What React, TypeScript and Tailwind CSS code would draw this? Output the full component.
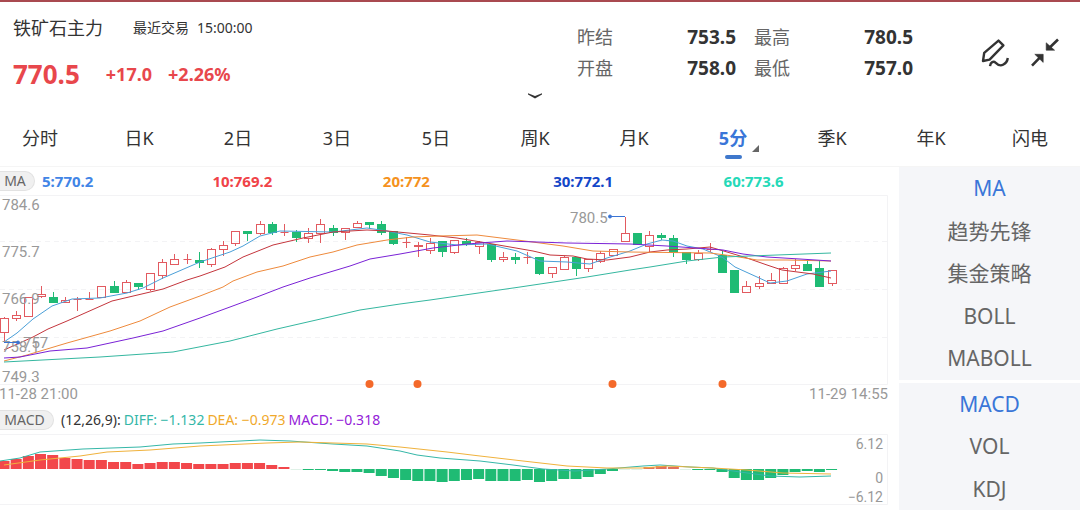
import { useState } from 'react';
import clsx from 'clsx';

// [high, body top, body bottom, low, up]
type Candle = [number, number, number, number, boolean];
type Point = [number, number];

const STEP = 12.17;
const FIRST_X = 4;

const periods = ['分时', '日K', '2日', '3日', '5日', '周K', '月K', '5分', '季K', '年K', '闪电'];
const mainIndicators = ['MA', '趋势先锋', '集金策略', 'BOLL', 'MABOLL'];
const subIndicators = ['MACD', 'VOL', 'KDJ'];

const quotes = [
  { label: '昨结', value: '753.5' },
  { label: '最高', value: '780.5' },
  { label: '开盘', value: '758.0' },
  { label: '最低', value: '757.0' },
];

const maLegend = [
  { text: '5:770.2', color: 'text-[#4285e6]' },
  { text: '10:769.2', color: 'text-[#f04348]' },
  { text: '20:772', color: 'text-[#f5921e]' },
  { text: '30:772.1', color: 'text-[#1446c8]' },
  { text: '60:773.6', color: 'text-[#25d9b8]' },
];

const candles: Candle[] = [
  [122, 123, 137, 147, true], [116, 120, 123, 126, true], [102, 102, 121, 121, true], [91, 99, 101, 103, true],
  [97, 102, 107, 107, false], [102, 105, 107, 107, true], [102, 104, 104, 116, true], [97, 104, 104, 104, true],
  [91, 91, 102, 103, true], [86, 91, 97, 97, false], [85, 87, 97, 97, true], [88, 88, 91, 95, false],
  [78, 78, 94, 96, true], [64, 67, 80, 84, true], [59, 64, 69, 69, true], [59, 64, 64, 69, true],
  [57, 65, 67, 73, false], [53, 54, 69, 72, true], [46, 50, 54, 61, true], [36, 36, 48, 51, true],
  [36, 36, 38, 46, false], [26, 29, 38, 40, true], [27, 29, 37, 40, false], [29, 37, 37, 41, true],
  [35, 37, 42, 47, false], [33, 38, 43, 48, true], [24, 29, 38, 48, true], [30, 33, 37, 41, false],
  [33, 33, 37, 45, true], [26, 28, 32, 33, true], [27, 27, 29, 34, false], [26, 29, 37, 40, false],
  [36, 36, 48, 50, false], [42, 47, 47, 53, true], [47, 50, 51, 62, true], [43, 48, 55, 59, true],
  [46, 46, 56, 62, false], [45, 45, 57, 59, true], [43, 46, 48, 51, false], [46, 47, 51, 59, true],
  [49, 49, 64, 67, false], [57, 62, 64, 67, true], [58, 62, 64, 69, false], [57, 62, 62, 69, true],
  [62, 62, 78, 80, false], [72, 72, 78, 83, true], [61, 62, 74, 75, true], [62, 62, 73, 81, false],
  [64, 64, 73, 77, true], [56, 58, 66, 68, true], [54, 54, 60, 60, true], [22, 38, 46, 47, true],
  [38, 38, 49, 49, false], [36, 40, 51, 57, true], [38, 40, 42, 45, false], [40, 43, 57, 62, false],
  [57, 57, 64, 69, false], [55, 58, 64, 66, true], [48, 54, 54, 57, true], [56, 60, 77, 77, false],
  [75, 75, 97, 97, false], [86, 91, 97, 97, true], [81, 88, 91, 94, true], [78, 85, 88, 88, true],
  [72, 73, 88, 88, true], [64, 70, 73, 76, true], [64, 69, 75, 75, false], [66, 73, 91, 91, false],
  [75, 75, 88, 91, true],
];

const maLines: { color: string; points: Point[] }[] = [
  {
    color: '#4a9fd8',
    points: [
      [4, 147], [17, 138], [33, 124], [52, 111], [72, 104], [100, 103], [127, 98], [143, 93], [163, 83], [200, 67],
      [230, 57], [243, 51], [260, 41], [280, 36], [333, 37], [367, 33], [387, 36], [407, 40], [430, 47], [457, 50],
      [487, 49], [517, 56], [540, 66], [567, 67], [590, 69], [607, 63], [630, 56], [647, 49], [662, 45], [673, 46],
      [687, 51], [703, 54], [722, 62], [735, 72], [757, 82], [770, 88], [787, 86], [807, 79], [831, 76],
    ],
  },
  {
    color: '#c4353c',
    points: [
      [4, 155], [33, 142], [48, 134], [67, 126], [112, 106], [163, 94], [187, 85], [200, 81], [225, 72], [243, 62],
      [273, 50], [303, 43], [333, 37], [367, 35], [387, 36], [430, 40], [457, 43], [487, 48], [533, 56], [550, 60],
      [573, 61], [587, 64], [607, 65], [630, 62], [650, 57], [667, 55], [687, 54], [710, 52], [727, 57], [747, 63],
      [767, 70], [782, 75], [813, 79], [831, 83],
    ],
  },
  {
    color: '#ee8a3c',
    points: [
      [4, 166], [27, 160], [67, 148], [110, 136], [140, 126], [170, 112], [200, 101], [223, 92], [233, 86], [257, 77],
      [283, 71], [310, 62], [333, 57], [357, 50], [387, 45], [413, 42], [440, 41], [477, 40], [517, 45], [563, 51],
      [593, 56], [630, 57], [710, 58], [733, 61], [757, 65], [787, 65], [831, 66],
    ],
  },
  {
    color: '#7a22d6',
    points: [
      [4, 163], [20, 162], [50, 156], [87, 153], [133, 143], [163, 136], [200, 123], [230, 112], [257, 102],
      [283, 92], [310, 83], [350, 71], [370, 64], [400, 59], [433, 53], [467, 49], [507, 46], [567, 48], [630, 49],
      [667, 51], [710, 54], [723, 55], [743, 59], [767, 62], [800, 64], [831, 66],
    ],
  },
  {
    color: '#35b7a0',
    points: [
      [4, 167], [100, 162], [173, 157], [230, 146], [277, 134], [360, 115], [400, 109], [430, 105], [520, 92],
      [587, 82], [630, 75], [650, 72], [687, 66], [723, 62], [750, 61], [831, 58],
    ],
  },
];

const priceLabels = [
  { text: '784.6', y: 15 },
  { text: '775.7', y: 62 },
  { text: '766.9', y: 109 },
  { text: '758.1', y: 157 },
  { text: '749.3', y: 187 },
];

const markers = [369, 417, 612, 722];

const macdBars = [
  8, 10, 13, 15, 14, 11, 10, 9, 9, 7, 7, 5, 6, 7, 7, 6, 5, 5, 5, 6, 6, 6, 4, 2, 0, -1, -1, -2, -3, -3, -4, -7, -9,
  -11, -12, -12, -13, -12, -11, -10, -12, -12, -12, -11, -13, -12, -10, -10, -8, -5, -2, 0, 0, 2, 3, 2, 0, -1, -1,
  -3, -9, -11, -11, -9, -6, -3, -2, -3, -1,
];

const diffLine: Point[] = [
  [0, 27], [20, 24], [40, 18], [83, 15], [140, 13], [173, 10], [200, 9], [260, 6], [290, 7], [333, 10], [367, 12],
  [400, 17], [417, 21], [440, 24], [480, 27], [513, 31], [543, 35], [575, 37], [607, 35], [643, 32], [660, 31],
  [690, 33], [713, 34], [740, 38], [770, 42], [800, 43], [831, 42],
];

const deaLine: Point[] = [
  [4, 31], [40, 26], [80, 22], [107, 18], [150, 16], [200, 12], [267, 9], [300, 8], [367, 10], [400, 13], [447, 18],
  [480, 22], [523, 27], [567, 32], [607, 34], [643, 34], [667, 32], [713, 34], [747, 36], [783, 39], [831, 40],
];

const toPoints = (points: Point[]) => points.map((p) => p.join(',')).join(' ');

const CandleShape = ({ candle, index }: { candle: Candle; index: number }) => {
  const [high, top, bottom, low, up] = candle;
  const x = Math.round(FIRST_X + index * STEP) + 0.5;
  const color = up ? '#e25a60' : '#1fbb74';

  return (
    <g stroke={color} strokeWidth={1}>
      {high < top && <line x1={x} y1={high} x2={x} y2={top} />}
      {low > bottom && <line x1={x} y1={bottom} x2={x} y2={low} />}
      {bottom === top ? (
        <line x1={x - 4} y1={top + 0.5} x2={x + 4} y2={top + 0.5} />
      ) : (
        <rect x={x - 4} y={top + 0.5} width={8} height={bottom - top} fill={up ? 'none' : color} />
      )}
    </g>
  );
};

const PriceChart = () => (
  <svg viewBox="0 0 899 210" className="block w-full font-[Roboto,sans-serif]" role="img" aria-label="5分 K线">
    <g stroke="#f3f3f5" fill="none">
      <path d="M0 .5H887.5V189.5H0" />
      <path d="M0 46.5H887M0 94.5H887M0 142.5H887" strokeDasharray="5 4" />
    </g>
    {candles.map((candle, i) => (
      <CandleShape key={i} candle={candle} index={i} />
    ))}
    {maLines.map((line) => (
      <polyline key={line.color} points={toPoints(line.points)} fill="none" stroke={line.color} strokeLinejoin="round" />
    ))}
    <g fill="#999" fontSize="15">
      {priceLabels.map((label) => (
        <text key={label.text} x="2" y={label.y}>{label.text}</text>
      ))}
      <text x="570" y="28">780.5</text>
      <text x="23" y="153">757</text>
      <text x="-1" y="204">11-28 21:00</text>
      <text x="888" y="204" textAnchor="end">11-29 14:55</text>
    </g>
    {/* High and low pointers */}
    <g stroke="#3a74d4" fill="#3a74d4">
      <path d="M611 21.5H625M4 147.5H18" />
      <circle cx="610" cy="21.5" r="1.5" />
      <circle cx="18" cy="147.5" r="1.5" />
    </g>
    {markers.map((x) => (
      <circle key={x} cx={x + 0.5} cy="189" r="4" fill="#f4692a" />
    ))}
  </svg>
);

const MacdChart = () => (
  <svg viewBox="0 0 899 76" className="block w-full font-[Roboto,sans-serif]" role="img" aria-label="MACD">
    <path d="M0 .5H887.5V70.5H0" stroke="#f3f3f5" fill="none" />
    {macdBars.map((value, i) => {
      const height = Math.max(Math.abs(value), 0.5);
      return (
        <rect
          key={i}
          x={FIRST_X + i * STEP - 5.5}
          y={value > 0 ? 35 - height : 35}
          width={11}
          height={height}
          fill={value > 0 ? (i > 50 ? '#e2705c' : '#f2474b') : value === 0 ? '#bfe3cf' : '#1fbb74'}
        />
      );
    })}
    <polyline points={toPoints(diffLine)} fill="none" stroke="#35b7a8" />
    <polyline points={toPoints(deaLine)} fill="none" stroke="#f0b23c" />
    <g fill="#999" fontSize="14" textAnchor="end">
      <text x="883" y="15">6.12</text>
      <text x="883" y="49">0</text>
      <text x="883" y="68">−6.12</text>
    </g>
  </svg>
);

interface IndicatorListProps {
  items: string[];
  active: string;
  onSelect: (item: string) => void;
  className: string;
}

const IndicatorList = ({ items, active, onSelect, className }: IndicatorListProps) => (
  <div className={clsx('flex flex-col bg-[#f5f6f9]', className)}>
    {items.map((item) => (
      <button
        key={item}
        type="button"
        onClick={() => onSelect(item)}
        className={clsx('flex-1 text-[21px] leading-7', item === active ? 'text-[#3a76d8]' : 'text-[#666]')}
      >
        {item}
      </button>
    ))}
  </div>
);

const App = () => {
  const [period, setPeriod] = useState('5分');
  const [mainIndicator, setMainIndicator] = useState('MA');
  const [subIndicator, setSubIndicator] = useState('MACD');

  return (
    <div className="overflow-hidden border-t-2 border-[#a94a50] bg-white font-['Noto_Sans','Noto_Sans_CJK_SC',sans-serif] text-[#333]">
      {/* Quote header */}
      <header className="flex items-start pr-[21px] pl-[13px]">
        <div className="w-[564px] shrink-0 pt-3">
          <div className="flex items-center gap-[30px] leading-7">
            <h1 className="text-lg leading-7">铁矿石主力</h1>
            <p className="flex gap-2 text-sm leading-7">
              <span>最近交易</span>
              <span>15:00:00</span>
            </p>
          </div>
          <div className="mt-[14px] flex items-center font-bold text-[#e8474c]">
            <span className="text-[26px] leading-9">770.5</span>
            <span className="ml-[26px] text-lg">+17.0</span>
            <span className="ml-4 text-lg">+2.26%</span>
          </div>
        </div>
        <dl className="grid grid-cols-[159px_159px] gap-x-[18px] pt-5 text-lg leading-[31px]">
          {quotes.map((quote) => (
            <div key={quote.label} className="flex justify-between">
              <dt className="text-[#666]">{quote.label}</dt>
              <dd className="text-[19px] font-bold">{quote.value}</dd>
            </div>
          ))}
        </dl>
        <div className="ml-auto flex gap-[22px] pt-9">
          <button type="button" aria-label="画线">
            <svg width="28" height="30" viewBox="0 0 28 30" fill="none" stroke="#333" strokeWidth="2.4">
              <path d="M2 23 3.2 14.8 17.5 2.6 22.4 7.4 8.6 21.6Z" strokeLinejoin="round" />
              <path d="M9 28.2C9.6 24 12.4 22.8 14.8 24.8C17 27 19 28.4 22 26.8C25 25.2 26.4 23.4 26.8 20" />
            </svg>
          </button>
          <button type="button" aria-label="退出全屏">
            <svg width="28" height="30" viewBox="0 0 28 30" fill="#333" stroke="#333">
              <path d="M27 1.5 18 10.2M1 27.6 9 19.4" strokeWidth="2.6" />
              <path d="M15.2 4.8V12.2H23.6ZM3.8 16.3H12.2V24.4Z" strokeWidth="0.6" />
            </svg>
          </button>
        </div>
      </header>
      <div className="flex justify-center pr-[10px]">
        <button type="button" aria-label="展开">
          <svg width="16" height="8" viewBox="0 0 16 8" fill="#333">
            <path d="M1 1.2 8 4 15 1.2 15 2.4 8 6.6 1 2.4Z" />
          </svg>
        </button>
      </div>

      {/* Period tabs */}
      <nav className="mt-[22px] flex justify-between border-b border-[#f5f5f5] pr-8 pb-3 pl-[22px]">
        {periods.map((item) => (
          <button
            key={item}
            type="button"
            onClick={() => setPeriod(item)}
            className={clsx(
              'relative w-9 text-lg leading-8 whitespace-nowrap',
              item === period ? 'font-bold text-[#3a76d8]' : 'text-[#333]',
            )}
          >
            {item}
            {item === period && (
              <>
                <span className="absolute -bottom-[5px] left-[10px] h-1 w-[17px] rounded-full bg-[#3f78cc]" />
                <svg className="absolute bottom-[2px] left-[37px]" width="7" height="7" viewBox="0 0 7 7" fill="#666">
                  <path d="M7 0V7H0Z" />
                </svg>
              </>
            )}
          </button>
        ))}
      </nav>

      <main className="flex">
        <div className="min-w-0 flex-1">
          <div className="flex items-center py-1 text-[15px] leading-5">
            <button
              type="button"
              className="w-[35px] rounded-r-full border border-l-0 border-[#e2e2e2] bg-[#f0f0f0] pr-1 text-sm leading-[18px] text-[#666]"
            >
              MA
            </button>
            <div className="ml-[7px] grid flex-1 grid-cols-5 pr-[5px] font-bold">
              {maLegend.map((item) => (
                <span key={item.text} className={item.color}>{item.text}</span>
              ))}
            </div>
          </div>
          <PriceChart />
          <div className="flex items-center pt-[5px] pb-1 text-sm leading-5">
            <button
              type="button"
              className="w-[54px] rounded-r-full border border-l-0 border-[#e2e2e2] bg-[#f0f0f0] pr-1 leading-[18px] text-[#666]"
            >
              MACD
            </button>
            <p className="ml-[7px] flex gap-[3px]">
              <span>(12,26,9):</span>
              <span className="text-[#35b7a8]">DIFF: −1.132</span>
              <span className="text-[#f0a92c]">DEA: −0.973</span>
              <span className="text-[#9420d8]">MACD: −0.318</span>
            </p>
          </div>
          <MacdChart />
        </div>
        <aside className="flex w-[181px] shrink-0 flex-col gap-[3px]">
          <IndicatorList items={mainIndicators} active={mainIndicator} onSelect={setMainIndicator} className="flex-[5]" />
          <IndicatorList items={subIndicators} active={subIndicator} onSelect={setSubIndicator} className="flex-[3]" />
        </aside>
      </main>
    </div>
  );
};

export default App;
